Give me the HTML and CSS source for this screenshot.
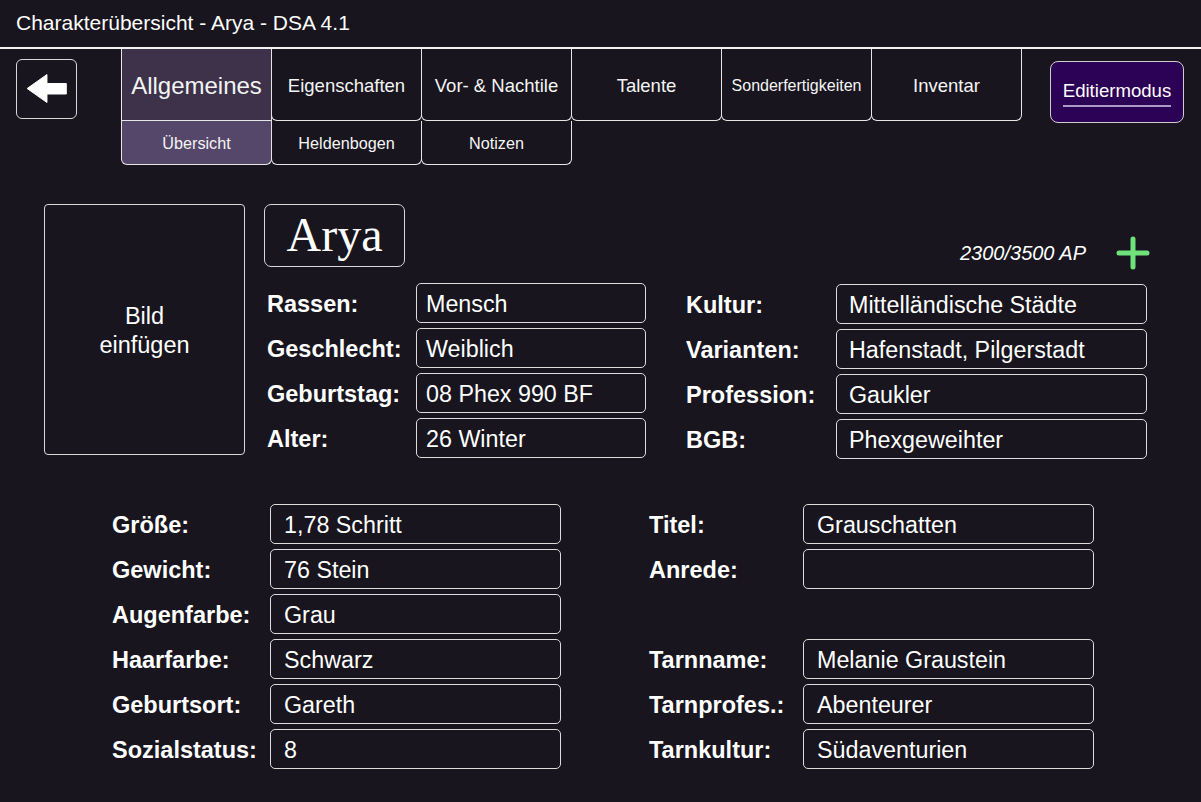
FILE: index.html
```html
<!DOCTYPE html>
<html lang="de">
<head>
<meta charset="utf-8">
<title>Charakterübersicht - Arya - DSA 4.1</title>
<link rel="stylesheet" href="styles.css">
</head>
<body>
<div class="app">
  <header class="titlebar">Charakterübersicht - Arya - DSA 4.1</header>

  <nav class="nav">
    <button class="back" aria-label="Zurück">
      <svg width="61" height="60" viewBox="0 0 61 60" aria-hidden="true">
        <polygon points="10.5,29.5 31,15 31,24.3 51,24.3 51,35.2 31,35.2 31,44" fill="#ffffff" stroke="#ffffff" stroke-width="1" stroke-linejoin="round"/>
      </svg>
    </button>
    <div class="tabs">
      <div class="tab tab-main active">Allgemeines</div>
      <div class="tab">Eigenschaften</div>
      <div class="tab">Vor- &amp; Nachtile</div>
      <div class="tab">Talente</div>
      <div class="tab tab-small">Sonderfertigkeiten</div>
      <div class="tab">Inventar</div>
      <div class="subtab active">Übersicht</div>
      <div class="subtab">Heldenbogen</div>
      <div class="subtab">Notizen</div>
    </div>
    <button class="edit"><span>Editiermodus</span></button>
  </nav>

  <section class="top">
    <div class="portrait">Bild<br>einfügen</div>
    <div class="info">
      <div class="info-head">
        <div class="name">Arya</div>
        <div class="ap">
          <span class="ap-text">2300/3500 AP</span>
          <svg class="plus" width="34" height="34" viewBox="0 0 34 34" aria-hidden="true">
            <path d="M17 3 V31 M3 17 H31" stroke="#6fe27c" stroke-width="5" stroke-linecap="round" fill="none"/>
          </svg>
        </div>
      </div>
      <div class="cols">
        <div class="col col-a">
          <div class="row"><span class="label">Rassen:</span><span class="value">Mensch</span></div>
          <div class="row"><span class="label">Geschlecht:</span><span class="value">Weiblich</span></div>
          <div class="row"><span class="label">Geburtstag:</span><span class="value">08 Phex 990 BF</span></div>
          <div class="row"><span class="label">Alter:</span><span class="value">26 Winter</span></div>
        </div>
        <div class="col col-b">
          <div class="row"><span class="label">Kultur:</span><span class="value">Mittelländische Städte</span></div>
          <div class="row"><span class="label">Varianten:</span><span class="value">Hafenstadt, Pilgerstadt</span></div>
          <div class="row"><span class="label">Profession:</span><span class="value">Gaukler</span></div>
          <div class="row"><span class="label">BGB:</span><span class="value">Phexgeweihter</span></div>
        </div>
      </div>
    </div>
  </section>

  <section class="bottom">
    <div class="col col-c">
      <div class="row"><span class="label">Größe:</span><span class="value">1,78 Schritt</span></div>
      <div class="row"><span class="label">Gewicht:</span><span class="value">76 Stein</span></div>
      <div class="row"><span class="label">Augenfarbe:</span><span class="value">Grau</span></div>
      <div class="row"><span class="label">Haarfarbe:</span><span class="value">Schwarz</span></div>
      <div class="row"><span class="label">Geburtsort:</span><span class="value">Gareth</span></div>
      <div class="row"><span class="label">Sozialstatus:</span><span class="value">8</span></div>
    </div>
    <div class="col col-d">
      <div class="row"><span class="label">Titel:</span><span class="value">Grauschatten</span></div>
      <div class="row"><span class="label">Anrede:</span><span class="value"></span></div>
      <div class="row row-spacer"></div>
      <div class="row"><span class="label">Tarnname:</span><span class="value">Melanie Graustein</span></div>
      <div class="row"><span class="label">Tarnprofes.:</span><span class="value">Abenteurer</span></div>
      <div class="row"><span class="label">Tarnkultur:</span><span class="value">Südaventurien</span></div>
    </div>
  </section>
</div>
</body>
</html>
```

FILE: styles.css
```css
* { box-sizing: border-box; }

html, body {
  margin: 0;
  padding: 0;
  background: #18151e;
}

body {
  font-family: "Liberation Sans", Arial, Helvetica, sans-serif;
  color: #ffffff;
}

.app {
  width: 1201px;
  height: 802px;
  background: #18151e;
  overflow: hidden;
}

/* Title bar */
.titlebar {
  height: 49px;
  padding-left: 16px;
  line-height: 46px;
  font-size: 21px;
  border-bottom: 2px solid #f2f2f2;
}

/* Navigation */
.nav {
  display: flex;
  align-items: flex-start;
  padding-left: 16px;
}

.back {
  width: 61px;
  height: 60px;
  margin-top: 10px;
  padding: 0;
  background: transparent;
  border: 1px solid #d8d8d8;
  border-radius: 6px;
  display: flex;
  align-items: center;
  justify-content: center;
  cursor: pointer;
}

.back svg { display: block; }

.tabs {
  margin-left: 44px;
  display: grid;
  grid-template-columns: repeat(6, 150px);
  grid-template-rows: 72px 44px;
}

.tab,
.subtab {
  display: flex;
  align-items: center;
  justify-content: center;
  border: 1px solid #e6e6e6;
  border-top: none;
  border-radius: 0 0 6px 6px;
  margin-right: -1px;
  color: #f4f4f4;
  white-space: nowrap;
}

.tab {
  font-size: 18.5px;
  padding-top: 3px;
}
.tab-main { font-size: 24px; }
.tab-small { font-size: 16px; }

.tab.active {
  background: #3d3249;
  border-radius: 0;
}

.subtab {
  font-size: 16.2px;
  padding-top: 1px;
}

.subtab.active {
  background: #554769;
}

.edit {
  width: 134px;
  height: 62px;
  margin-top: 12px;
  margin-left: 29px;
  background: #2b0256;
  border: 1px solid #cfcfcf;
  border-radius: 8px;
  color: #ffffff;
  font-family: "Liberation Sans", Arial, sans-serif;
  font-size: 18.6px;
  padding: 0;
  display: flex;
  align-items: center;
  justify-content: center;
  cursor: pointer;
}

.edit span {
  display: inline-block;
  margin-top: 4px;
  padding-bottom: 4px;
  border-bottom: 2px solid #a99bc2;
  line-height: 20px;
}

/* Top section */
.top {
  display: flex;
  align-items: flex-start;
  padding: 39px 51px 0 44px;
}

.portrait {
  width: 201px;
  height: 251px;
  flex: none;
  border: 1px solid #d8d8d8;
  border-radius: 4px;
  display: flex;
  align-items: center;
  justify-content: center;
  text-align: center;
  font-size: 23.5px;
  line-height: 29px;
  padding-top: 2px;
}

.info {
  flex: 1;
  margin-left: 19px;
}

.info-head {
  display: flex;
  justify-content: space-between;
  height: 62px;
}

.name {
  width: 141px;
  height: 63px;
  border: 1px solid #d8d8d8;
  border-radius: 7px;
  font-family: "Liberation Serif", "Times New Roman", serif;
  font-size: 48px;
  display: flex;
  align-items: center;
  justify-content: center;
  padding-bottom: 2px;
}

.ap {
  display: flex;
  align-items: center;
  align-self: flex-end;
  margin-bottom: -4px;
}

.ap-text {
  font-style: italic;
  font-size: 20px;
  margin-right: 30px;
}

.plus { display: block; }

.cols {
  display: flex;
  gap: 40px;
  margin-top: 17px;
  padding-left: 3px;
}

.col {
  display: flex;
  flex-direction: column;
  gap: 5px;
}

.row {
  display: grid;
  grid-template-columns: var(--lw) var(--vw);
  align-items: center;
  height: 40px;
}

.col-a { --lw: 149px; --vw: 230px; }
.col-b { --lw: 150px; --vw: 311px; margin-top: 1px; }
.col-c { --lw: 158px; --vw: 291px; }
.col-d { --lw: 154px; --vw: 291px; }

.label {
  font-weight: bold;
  font-size: 23.5px;
  white-space: nowrap;
  padding-top: 2px;
}

.value {
  height: 40px;
  border: 1px solid #dcdcdc;
  border-radius: 5px;
  display: flex;
  align-items: center;
  padding-left: 9px;
  padding-top: 2px;
  font-size: 23.3px;
  white-space: nowrap;
}

.col-b .value { padding-left: 12px; }
.col-c .value,
.col-d .value { padding-left: 13px; }

/* Bottom section */
.bottom {
  display: flex;
  gap: 88px;
  padding-left: 112px;
  margin-top: 45px;
}
```
